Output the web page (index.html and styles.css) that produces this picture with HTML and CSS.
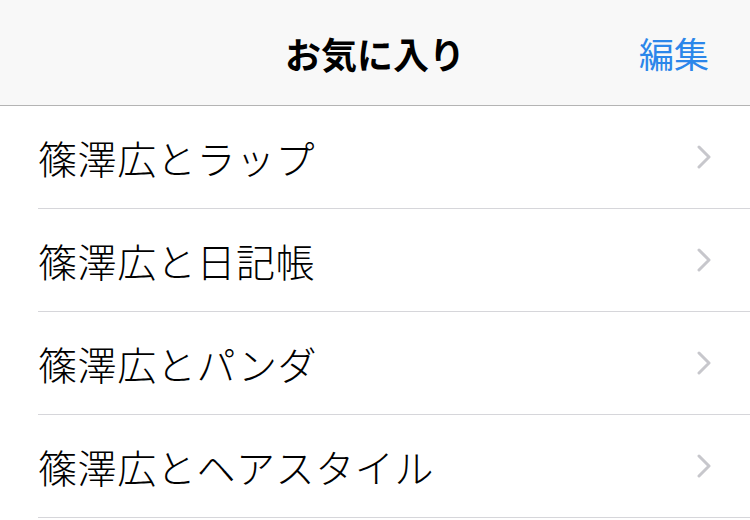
FILE: index.html
```html
<!DOCTYPE html>
<html lang="ja">
<head>
<meta charset="utf-8">
<title>お気に入り</title>
<link rel="stylesheet" href="styles.css">
</head>
<body>
<header class="navbar">
  <div class="nav-side"></div>
  <h1 class="nav-title">お気に入り</h1>
  <div class="nav-side nav-right"><a class="nav-action">編集</a></div>
</header>
<ul class="list">
  <li class="row"><div class="row-inner"><span class="row-label">篠澤広とラップ</span><svg class="chev" width="14" height="24" viewBox="0 0 14 24"><polyline points="2,2 12,12 2,22" fill="none" stroke="#c7c7cc" stroke-width="3" stroke-linecap="round" stroke-linejoin="round"/></svg></div></li>
  <li class="row"><div class="row-inner"><span class="row-label">篠澤広と日記帳</span><svg class="chev" width="14" height="24" viewBox="0 0 14 24"><polyline points="2,2 12,12 2,22" fill="none" stroke="#c7c7cc" stroke-width="3" stroke-linecap="round" stroke-linejoin="round"/></svg></div></li>
  <li class="row"><div class="row-inner"><span class="row-label">篠澤広とパンダ</span><svg class="chev" width="14" height="24" viewBox="0 0 14 24"><polyline points="2,2 12,12 2,22" fill="none" stroke="#c7c7cc" stroke-width="3" stroke-linecap="round" stroke-linejoin="round"/></svg></div></li>
  <li class="row"><div class="row-inner"><span class="row-label">篠澤広とヘアスタイル</span><svg class="chev" width="14" height="24" viewBox="0 0 14 24"><polyline points="2,2 12,12 2,22" fill="none" stroke="#c7c7cc" stroke-width="3" stroke-linecap="round" stroke-linejoin="round"/></svg></div></li>
</ul>
</body>
</html>
```

FILE: styles.css
```css
html, body {
  margin: 0;
  padding: 0;
  background: #ffffff;
  font-family: "Noto Sans CJK JP", "Noto Sans", sans-serif;
  color: #000000;
}

.navbar {
  height: 105px;
  background: #f8f8f8;
  border-bottom: 1px solid #b4b4b4;
  display: grid;
  grid-template-columns: 1fr auto 1fr;
  align-items: center;
}

.nav-title {
  margin: 0;
  font-size: 36px;
  font-weight: 700;
  line-height: 1;
  letter-spacing: 0;
}

.nav-right {
  display: flex;
  justify-content: flex-end;
  padding-right: 41px;
}

.nav-action {
  font-size: 35px;
  line-height: 1;
  color: #2b86ea;
}

.list {
  list-style: none;
  margin: 0;
  padding: 0;
}

.row {
  padding-left: 38px;
}

.row-inner {
  height: 102px;
  border-bottom: 1px solid #d6d6da;
  display: flex;
  align-items: center;
  justify-content: space-between;
  padding-right: 39px;
}

.row-label {
  font-size: 39px;
  font-weight: 300;
  letter-spacing: 0.6px;
  line-height: 1;
}

.chev {
  display: block;
  flex: none;
}
```
